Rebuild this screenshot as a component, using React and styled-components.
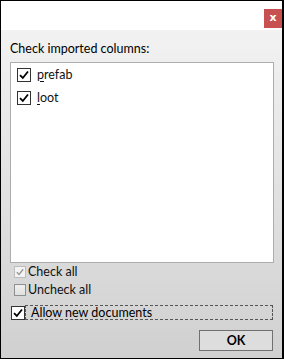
import React from 'react'
import styled, { createGlobalStyle } from 'styled-components'

const Global = createGlobalStyle`
  html, body { margin: 0; padding: 0; background: #ffffff; }
  * { box-sizing: border-box; }
`

const Window = styled.div`
  width: 284px;
  height: 359px;
  border: 1px solid #000;
  border-right-width: 2px;
  display: flex;
  flex-direction: column;
  font-family: Lato, "Open Sans", sans-serif;
  font-size: 12.5px;
  color: #000;
`

const TitleBar = styled.div`
  height: 29px;
  background: #fff;
  display: flex;
  justify-content: flex-end;
  align-items: flex-start;
  padding-top: 8px;
`

const CloseButton = styled.div`
  width: 18px;
  height: 19px;
  background: #c75050;
  color: #fff;
  font-weight: bold;
  font-size: 11px;
  line-height: 18px;
  text-align: center;
  font-family: "DejaVu Sans", sans-serif;
`

const Body = styled.div`
  flex: 1;
  background: linear-gradient(#f2f2f2, #d0d0d0);
  display: flex;
  flex-direction: column;
  padding: 11px 8px 0 9px;
`

const Label = styled.div`
  line-height: 16px;
  height: 16px;
  margin-bottom: 5px;
`

const ListBox = styled.div`
  height: 201px;
  width: 264px;
  background: #fff;
  border: 1px solid #adadad;
  padding: 0 0 0 6px;
`

const Item = styled.div`
  display: flex;
  align-items: center;
  gap: 6px;
  height: 23px;
`

const Box = styled.span`
  width: ${p => p.size || 14}px;
  height: ${p => p.size || 14}px;
  border: 1px solid ${p => p.border || '#333'};
  background: ${p => p.fill || '#fff'};
  display: flex;
  align-items: center;
  justify-content: center;
  flex: none;
`

const Check = ({ color = '#000', size = 10 }) => (
  <svg width={size} height={size} viewBox="0 0 10 10">
    <path d="M1 5.2 L3.8 8 L9 1.5" fill="none" stroke={color} strokeWidth="1.8" />
  </svg>
)

const Text = styled.span`
  color: #111;
  line-height: 16px;
`

const Under = styled.span`
  text-decoration: underline;
  text-underline-offset: 2px;
`

const Option = styled.div`
  display: flex;
  align-items: center;
  gap: 2px;
  height: 18px;
  padding-left: 4px;
`

const FocusRow = styled.div`
  display: flex;
  align-items: center;
  height: 15px;
  margin-top: 6px;
  padding-left: 1px;
`

const Focus = styled.div`
  flex: 1;
  height: 15px;
  border: 1px dashed #555;
  margin-right: 1px;
  padding-left: 5px;
  line-height: 13px;
`

const Footer = styled.div`
  display: flex;
  justify-content: flex-end;
  margin-top: 10px;
  padding-right: 1px;
`

const Button = styled.div`
  width: 74px;
  height: 21px;
  border: 1px solid #707070;
  background: #dddddd;
  font-weight: bold;
  text-align: center;
  line-height: 19px;
  font-size: 12.5px;
`

const App = () => (
  <>
    <Global />
    <Window>
      <TitleBar>
        <CloseButton>x</CloseButton>
      </TitleBar>
      <Body>
        <Label>Check imported columns:</Label>
        <ListBox>
          <Item>
            <Box><Check /></Box>
            <Text><Under>p</Under>refab</Text>
          </Item>
          <Item>
            <Box><Check /></Box>
            <Text><Under>l</Under>oot</Text>
          </Item>
        </ListBox>
        <Option>
          <Box size={12} border="#bcbcbc" fill="#f4f4f4"><Check color="#9a9a9a" size={8} /></Box>
          <Text>Check all</Text>
        </Option>
        <Option>
          <Box size={12} border="#8e8f8f" fill="linear-gradient(#f0f0f0, #e0e0e0)" />
          <Text>Uncheck all</Text>
        </Option>
        <FocusRow>
          <Box><Check /></Box>
          <Focus>Allow new documents</Focus>
        </FocusRow>
        <Footer>
          <Button>OK</Button>
        </Footer>
      </Body>
    </Window>
  </>
)

export default App
